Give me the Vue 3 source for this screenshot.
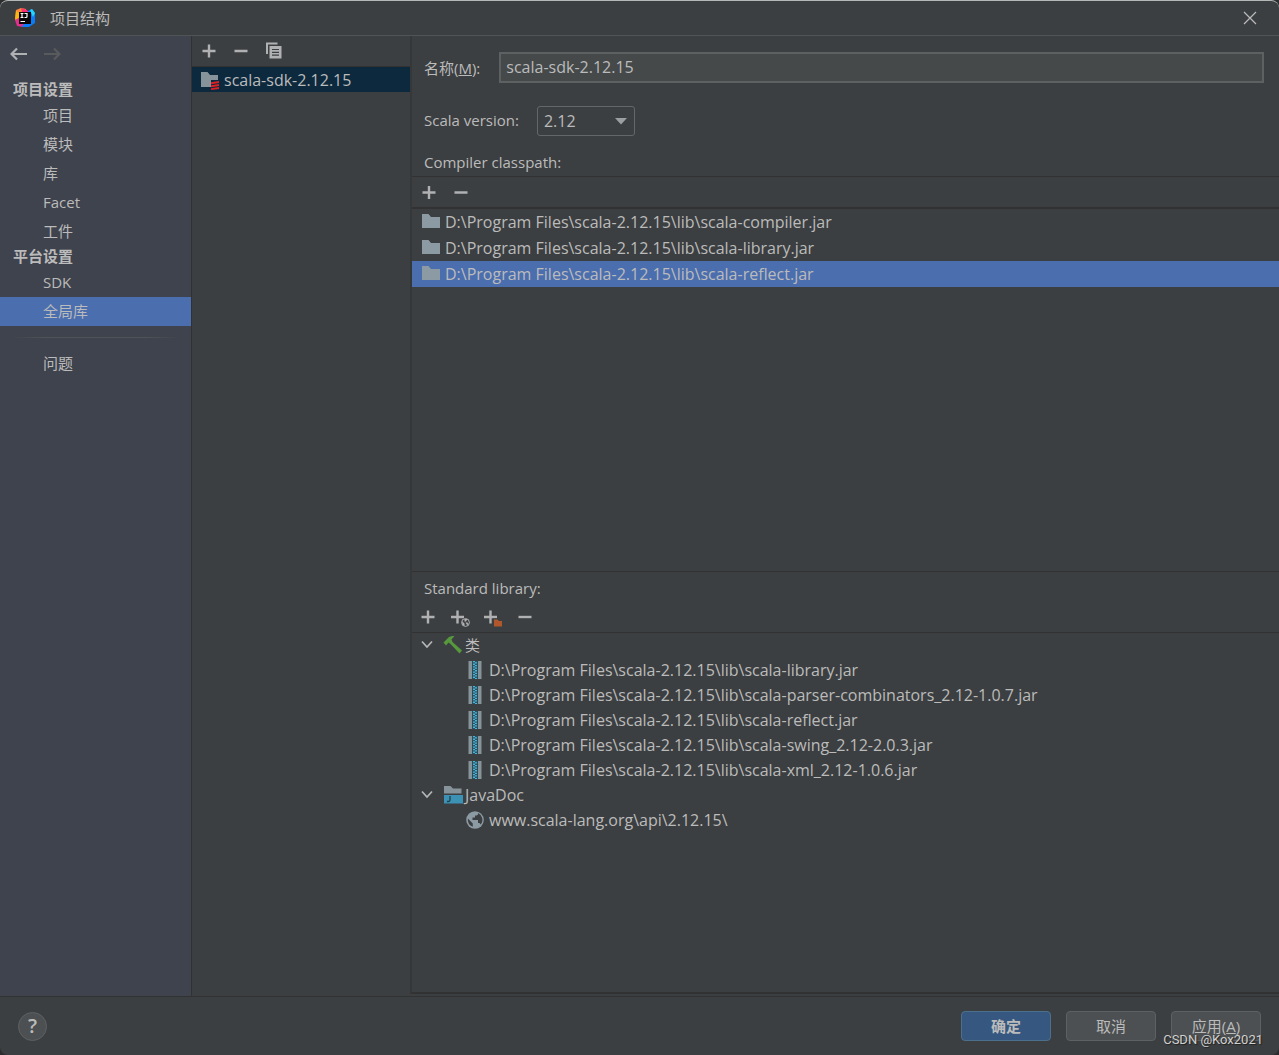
<script setup>
import { ref } from 'vue'

const projectItems = ['项目', '模块', '库', 'Facet', '工件']
const platformItems = ['SDK', '全局库']
const selectedItem = ref('全局库')

const libraryName = ref('scala-sdk-2.12.15')
const version = ref('2.12')

const root = 'D:\\Program Files\\scala-2.12.15\\lib\\'
const compilerJars = ['scala-compiler.jar', 'scala-library.jar', 'scala-reflect.jar'].map((n) => root + n)
const selectedJar = ref(compilerJars[2])
const classJars = [
  'scala-library.jar',
  'scala-parser-combinators_2.12-1.0.7.jar',
  'scala-reflect.jar',
  'scala-swing_2.12-2.0.3.jar',
  'scala-xml_2.12-1.0.6.jar',
].map((n) => root + n)
const docUrl = 'www.scala-lang.org\\api\\2.12.15\\'
</script>

<template>
  <div class="dialog">
    <header class="titlebar">
      <svg class="logo" width="20" height="20" viewBox="0 0 20 20" aria-hidden="true">
        <path d="M1 2 6 0 11 1 9 10 3 14 0 11Z" fill="#fc8a3c" />
        <path d="M6 0 12 2 15 6 8 8Z" fill="#fe2d74" />
        <path d="M1 3 5 5 4 10 0 12Z" fill="#fdb60d" />
        <path d="M0 12 4 10 9 16 8 19 2 18Z" fill="#e0308c" />
        <path d="M13 3 17 1 20 5 20 15 14 19 7 19 10 14Z" fill="#087cfa" />
        <path d="M15 2 17 1 20 5 18 9Z" fill="#21d7fd" />
        <rect x="4" y="4" width="12" height="12" fill="#0b0608" />
        <path d="M5.500 5.500h3M7 5.500v4M5.500 9.500h3M9.500 5.500h2.500v3q0 1-1 1H9.500" fill="none" stroke="#fff" stroke-width="1.200" />
        <path d="M5.500 13.500h4.500" stroke="#fff" stroke-width="1.200" />
      </svg>
      <h1>项目结构</h1>
      <button class="close" type="button" aria-label="关闭">
        <svg width="14" height="14" viewBox="0 0 14 14"><path d="M1 1 13 13M13 1 1 13" stroke="#bbb" stroke-width="1.200" /></svg>
      </button>
    </header>

    <div class="body">
      <nav class="sidebar">
        <div class="history">
          <button type="button" aria-label="后退">
            <svg width="18" height="14" viewBox="0 0 18 14"><path d="M1.500 7H17M7 1.500 1.500 7 7 12.500" fill="none" stroke="#afb1b3" stroke-width="2.200" /></svg>
          </button>
          <button type="button" aria-label="前进" disabled>
            <svg width="18" height="14" viewBox="0 0 18 14"><path d="M1 7H16.500M11 1.500 16.500 7 11 12.500" fill="none" stroke="#585a5c" stroke-width="2.200" /></svg>
          </button>
        </div>
        <h2>项目设置</h2>
        <a v-for="item in projectItems" :key="item" href="#" class="nav-item" :class="{ active: item === selectedItem }" @click.prevent="selectedItem = item">{{ item }}</a>
        <h2>平台设置</h2>
        <a v-for="item in platformItems" :key="item" href="#" class="nav-item" :class="{ active: item === selectedItem }" @click.prevent="selectedItem = item">{{ item }}</a>
        <div class="rule"></div>
        <a href="#" class="nav-item" :class="{ active: selectedItem === '问题' }" @click.prevent="selectedItem = '问题'">问题</a>
      </nav>

      <section class="libraries">
        <div class="toolbar">
          <button type="button" aria-label="添加">
            <svg width="20" height="20" viewBox="0 0 20 20"><path d="M4.500 10H17.500M11 3.500V16.500" stroke="#afb1b3" stroke-width="2.400" /></svg>
          </button>
          <button type="button" aria-label="移除">
            <svg width="20" height="20" viewBox="0 0 20 20"><path d="M4.500 10H17.500" stroke="#afb1b3" stroke-width="2.400" /></svg>
          </button>
          <button type="button" aria-label="复制">
            <svg width="20" height="20" viewBox="0 0 20 20">
              <path d="M4 1.500H15.500V3.500H6V13H4Z" fill="#afb1b3" />
              <path d="M7.500 5H19.500V17.500H7.500Z" fill="#afb1b3" />
              <path d="M10 8.500H17M10 11.300H17M10 14.100H17" stroke="#3c3f41" stroke-width="1.200" />
            </svg>
          </button>
        </div>
        <div class="library selected">
          <svg width="20" height="20" viewBox="0 0 20 20" aria-hidden="true">
            <path d="M1 2H7.500L10 5H18V10H11V17H1Z" fill="#87939a" />
            <path d="M11 12.200 19 11V13L11 14.200ZM11 15.200 19 14V16L11 17.200ZM11 18.200 19 17V19L11 20Z" fill="#de1f24" />
          </svg>
          <span class="value">scala-sdk-2.12.15</span>
        </div>
      </section>

      <main class="details">
        <div class="field name-row">
          <label for="lib-name">名称(<u>M</u>):</label>
          <input id="lib-name" v-model="libraryName" class="value" type="text" />
        </div>
        <div class="field version-row">
          <label for="version">Scala version:</label>
          <div class="select-box">
            <select id="version" v-model="version" class="value">
              <option>2.12</option>
            </select>
            <svg width="12" height="8" viewBox="0 0 12 8" aria-hidden="true"><path d="M0 1H12L6 7.500Z" fill="#9b9fa1" /></svg>
          </div>
        </div>
        <h3 class="compiler-title">Compiler classpath:</h3>

        <div class="toolbar compiler-tools">
          <button type="button" aria-label="添加">
            <svg width="20" height="20" viewBox="0 0 20 20"><path d="M4.500 10.500H17.500M11 4V17" stroke="#afb1b3" stroke-width="2.400" /></svg>
          </button>
          <button type="button" aria-label="移除">
            <svg width="20" height="20" viewBox="0 0 20 20"><path d="M4.500 10.500H17.500" stroke="#afb1b3" stroke-width="2.400" /></svg>
          </button>
        </div>
        <ul class="list">
          <li v-for="jar in compilerJars" :key="jar" :class="{ selected: jar === selectedJar }" @click="selectedJar = jar">
            <svg width="18" height="18" viewBox="0 0 18 18" aria-hidden="true"><path d="M0 1H6.500L9 4H18V15H0Z" fill="#8c9aa3" /></svg>
            <span class="value">{{ jar }}</span>
          </li>
        </ul>

        <h3 class="standard-title">Standard library:</h3>
        <div class="toolbar standard-tools">
          <button type="button" aria-label="添加">
            <svg width="20" height="20" viewBox="0 0 20 20"><path d="M3.500 10H16.500M10 3.500V16.500" stroke="#afb1b3" stroke-width="2.400" /></svg>
          </button>
          <button type="button" aria-label="指定文档 URL">
            <svg width="20" height="20" viewBox="0 0 20 20">
              <path d="M1 10H14M7.500 3.500V16.500" stroke="#afb1b3" stroke-width="2.400" />
              <circle cx="15.500" cy="15.500" r="4.500" fill="#3c3f41" />
              <circle cx="15.500" cy="15.500" r="3.900" fill="none" stroke="#afb1b3" stroke-width="1" />
              <path d="M12 14 14.500 16.500V19L12.500 18ZM14.500 12H17.500L16 14.500H14.500ZM15.500 15.500H17.500L18.500 17.500 17 18Z" fill="#afb1b3" />
            </svg>
          </button>
          <button type="button" aria-label="排除目录">
            <svg width="20" height="20" viewBox="0 0 20 20">
              <path d="M2 10H15M8.500 3.500V16.500" stroke="#afb1b3" stroke-width="2.400" />
              <path d="M11 11.500H20V20H11Z" fill="#3c3f41" />
              <path d="M12 12.500H15.500L17 14H20V19.500H12Z" fill="#b0582c" />
            </svg>
          </button>
          <button type="button" aria-label="移除">
            <svg width="20" height="20" viewBox="0 0 20 20"><path d="M4.500 10H17.500" stroke="#afb1b3" stroke-width="2.400" /></svg>
          </button>
        </div>

        <ul class="tree">
          <li class="branch">
            <svg class="chevron" width="12" height="12" viewBox="0 0 12 12" aria-hidden="true"><path d="M1 2.500 6 8 11 2.500" fill="none" stroke="#b4b6b8" stroke-width="1.700" /></svg>
            <svg width="20" height="20" viewBox="0 0 20 20" aria-hidden="true"><path d="M0.500 7.500 6 2 9 1H11.500L8.500 4.500 9.500 7 19 15.500 16.500 18.500 7.500 9 5.500 7.500 3 10.500Z" fill="#57983e" /></svg>
            <span>类</span>
          </li>
          <li v-for="jar in classJars" :key="jar" class="leaf">
            <svg width="18" height="20" viewBox="0 0 18 20" aria-hidden="true">
              <path d="M2.500 1H6V19H2.500ZM12 1H15.500V19H12Z" fill="#87939a" />
              <path d="M6.500 1H11.500V19H6.500Z" fill="#2c5563" />
              <path d="M8 1V19" stroke="#40b6e0" stroke-width="2" stroke-dasharray="1.300 1.300" />
              <path d="M10 1V19" stroke="#40b6e0" stroke-width="2" stroke-dasharray="1.300 1.300" stroke-dashoffset="1.300" />
            </svg>
            <span class="value">{{ jar }}</span>
          </li>
          <li class="branch">
            <svg class="chevron" width="12" height="12" viewBox="0 0 12 12" aria-hidden="true"><path d="M1 2.500 6 8 11 2.500" fill="none" stroke="#b4b6b8" stroke-width="1.700" /></svg>
            <svg width="20" height="20" viewBox="0 0 20 20" aria-hidden="true">
              <path d="M1 1H7.500L10 3.500H18.500V8.500H1Z" fill="#87939a" />
              <path d="M1 10H20V18.500H1Z" fill="#3b92b4" />
              <path d="M7 11V15Q7 16.500 5.500 16.500H4" fill="none" stroke="#233e4a" stroke-width="1.300" />
            </svg>
            <span class="value">JavaDoc</span>
          </li>
          <li class="leaf">
            <svg width="18" height="18" viewBox="0 0 18 18" aria-hidden="true">
              <circle cx="9" cy="9" r="8.800" fill="#8c9aa3" />
              <path d="M1.800 7.500 6.800 12.500V15.800Q1.500 14 1.800 7.500ZM12 2Q12.500 4.300 10.500 4.500H9V6.500H6.500V9H12V12H13.500L14.500 13.500Q17 11 16.200 7Q15.200 3.500 12 2Z" fill="#3c3f41" />
            </svg>
            <span class="value">{{ docUrl }}</span>
          </li>
        </ul>
      </main>
    </div>

    <footer class="footer">
      <button class="help" type="button" aria-label="帮助">?</button>
      <div class="actions">
        <button type="button" class="primary">确定</button>
        <button type="button">取消</button>
        <button type="button">应用(<u>A</u>)</button>
      </div>
      <span class="credit">CSDN @Kox2021</span>
    </footer>
  </div>
</template>

<style>
body {
  margin: 0;
  background: #2b2d2e;
}
</style>

<style scoped>
* {
  box-sizing: border-box;
}

.dialog {
  display: flex;
  flex-direction: column;
  min-height: 100vh;
  overflow: hidden;
  border-top: 1px solid #b4b8b6;
  border-radius: 8px;
  background: #3c3f41;
  color: #bbb;
  font: 15px/20px "Open Sans", "Noto Sans CJK SC", sans-serif;
}

button {
  padding: 0;
  border: 0;
  background: none;
  color: inherit;
  font: inherit;
}

svg {
  display: block;
  flex: none;
}

h1,
h2,
h3,
ul {
  margin: 0;
  padding: 0;
  font-size: 15px;
  font-weight: 400;
  list-style: none;
}

.value {
  font-size: 16px;
}

.titlebar {
  display: flex;
  align-items: center;
  height: 35px;
  padding: 0 16px 0 15px;
  border-bottom: 1px solid #515456;
}

.titlebar h1 {
  margin-left: 15px;
  flex: 1;
}

.close {
  width: 26px;
  height: 26px;
  display: grid;
  place-items: center;
}

.body {
  flex: 1;
  display: flex;
}

.sidebar {
  flex: none;
  width: 192px;
  border-right: 1px solid #323232;
  background: #3f434d;
}

.history {
  display: flex;
  gap: 15px;
  height: 43px;
  padding: 11px 0 0 10px;
  align-items: flex-start;
}

.sidebar h2 {
  height: 22px;
  padding-left: 13px;
  font-weight: 700;
  line-height: 21px;
}

.nav-item {
  display: block;
  height: 29px;
  padding-left: 43px;
  color: inherit;
  line-height: 29px;
  text-decoration: none;
}

.nav-item.active {
  background: #4b6eaf;
}

.rule {
  height: 1px;
  margin: 11px 12px;
  background: linear-gradient(to right, transparent, #515456 20%, #515456 80%, transparent);
}

.libraries {
  flex: none;
  width: 218px;
}

.toolbar {
  display: flex;
  align-items: center;
  height: 31px;
  border-bottom: 1px solid #323232;
}

.toolbar button {
  width: 32px;
  height: 28px;
  display: grid;
  place-items: center;
}

.library {
  display: flex;
  align-items: center;
  gap: 4px;
  height: 25px;
  padding-left: 8px;
}

.library.selected {
  background: #0d293e;
}

.details {
  flex: 1;
  min-width: 0;
  display: flex;
  flex-direction: column;
  border-left: 2px solid #353739;
  border-bottom: 2px solid #323232;
  margin-bottom: 2px;
}

.field {
  display: flex;
  align-items: center;
  padding: 0 15px 0 12px;
}

.name-row {
  gap: 19px;
  margin-top: 16px;
}

.name-row input {
  flex: 1;
  min-width: 0;
  height: 31px;
  padding: 0 5px 2px;
  border: 2px solid #5e6162;
  border-radius: 0;
  background: #45494a;
  color: inherit;
  font-family: inherit;
  outline: 0;
}

.version-row {
  gap: 18px;
  margin-top: 23px;
}

.version-row label {
  padding-bottom: 2px;
}

.select-box {
  position: relative;
  width: 98px;
}

.select-box select {
  display: block;
  width: 100%;
  height: 30px;
  padding: 0 6px;
  border: 1px solid #646769;
  border-radius: 3px;
  appearance: none;
  background: #3c3f41;
  color: inherit;
  font-family: inherit;
}

.select-box svg {
  position: absolute;
  top: 11px;
  right: 8px;
  pointer-events: none;
}

.compiler-title {
  padding: 16px 12px 4px;
}

.compiler-tools {
  height: 33px;
  border-top: 1px solid #323232;
  border-bottom-width: 2px;
}

.list {
  flex: 1 0 2px;
}

.list li {
  display: flex;
  align-items: center;
  gap: 5px;
  height: 26px;
  padding-left: 10px;
}

.list li.selected {
  background: #4b6eaf;
}

.standard-title {
  padding: 6px 12px 4px;
  border-top: 1px solid #323232;
}

.tree {
  flex: 1 0 0;
}

.tree li {
  display: flex;
  align-items: center;
  height: 25px;
}

.branch {
  gap: 2px;
  padding-left: 9px;
}

.chevron {
  margin-right: 8px;
}

.leaf {
  gap: 5px;
  padding-left: 54px;
}

.footer {
  position: relative;
  display: flex;
  align-items: center;
  justify-content: space-between;
  height: 59px;
  padding: 0 18px;
  border-top: 1px solid #323232;
}

.help {
  width: 29px;
  height: 29px;
  border: 1px solid #5e6163;
  border-radius: 50%;
  background: #4c5052;
  font-size: 20px;
  font-weight: 600;
  line-height: 26px;
}

.actions {
  display: flex;
  gap: 15px;
}

.actions button {
  width: 90px;
  height: 30px;
  border: 1px solid #5e6163;
  border-radius: 4px;
  background: #4c5052;
}

.actions .primary {
  border-color: #4c708c;
  background: #365880;
  font-weight: 700;
}

.credit {
  position: absolute;
  right: 16px;
  bottom: 6px;
  color: #d0d0d0;
  font: 13px/18px Roboto, sans-serif;
  text-shadow: 1px 1px 1px #222;
}
</style>
